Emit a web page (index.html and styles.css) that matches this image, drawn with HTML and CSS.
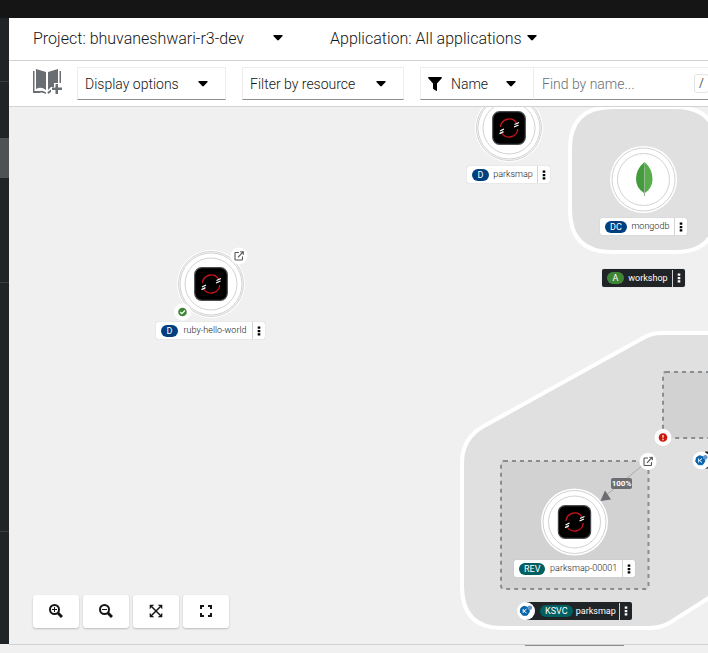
FILE: index.html
```html
<!DOCTYPE html>
<html lang="en">
<head>
<meta charset="utf-8">
<title>Topology</title>
<link rel="stylesheet" href="styles.css">
</head>
<body>
<svg class="defs" aria-hidden="true">
  <symbol id="caret" viewBox="0 0 10 6"><path d="M1 0h8q1 0 .6.9L5.8 5q-.8.8-1.6 0L.4.9Q0 0 1 0z"/></symbol>
  <symbol id="kebab" viewBox="0 0 4 10"><path d="M.7.5h2.6v2.300H.7zM.7 3.900h2.600v2.300H.7zM.7 7.300h2.600v2.300H.7z"/></symbol>
  <symbol id="open" viewBox="0 0 10 10"><path d="M5 1.500H1.800Q1 1.500 1 2.300V8.200Q1 9 1.800 9H7.700Q8.500 9 8.500 8.200V5.500M4 6.300 9 1M6.200.700H9.300V3.800" fill="none" stroke="#555" stroke-width="1.100"/></symbol>
  <symbol id="openshift" viewBox="0 0 34 34">
    <rect x=".7" y=".7" width="32.600" height="32.600" rx="7" fill="#000" stroke="#4a4d50" stroke-width="1.200"/>
    <path d="M8.500 16A8.700 8.700 0 0 1 24.500 12M25.700 18A8.700 8.700 0 0 1 9.700 22" fill="none" stroke="#c9151b" stroke-width="1.300"/>
    <path d="M22.500 13.500 27 11.500M22 16 26.500 14M8 20 12 18M7.500 22.700 11.500 20.700" stroke="#fff" stroke-width="1.300"/>
  </symbol>
  <symbol id="knative" viewBox="0 0 18 18">
    <circle cx="9" cy="9" r="9" fill="#fff"/>
    <path d="M7 4.200 11 5.500 12.500 9.500 10 13.200 5.800 13.200 3.200 10 4 6z" fill="#0865ad" stroke="#0865ad" stroke-width="1" stroke-linejoin="round"/>
    <circle cx="12.800" cy="5.800" r="2.300" fill="#6695ca"/>
    <path d="M6.200 7v4M9.500 7 7 9l2.500 2" fill="none" stroke="#fff" stroke-width="1"/>
  </symbol>
</svg>
<header class="masthead"></header>
<div class="shell">
  <nav class="sidebar" aria-label="Main"><div class="nav-first"></div><div class="nav-gap"></div><div class="nav-current"></div><div class="nav-mid"></div><div class="nav-mid2"></div></nav>
  <main class="main">
    <div class="context">
      <button class="context-item project">Project: bhuvaneshwari-r3-dev<svg class="caret"><use href="#caret"/></svg></button>
      <button class="context-item app">Application: All applications<svg class="caret"><use href="#caret"/></svg></button>
    </div>
    <div class="toolbar">
      <button class="catalog" aria-label="Add to project">
        <svg width="30" height="28" viewBox="0 0 30 28" fill="#6a6e73"><path d="M3 1 13 4V22Q8 18 3 21z"/><path d="M15 4 25 1V15H21V19H18L15 22z"/><path d="M0 3H1.500V23H7Q10 22 13 24.500V26Q9 23.500 6 25H0zM26.500 3H28V15H26.500zM14.500 24 18 21.500V24L15 26zM22.500 16H25V19.500H29V22H25V26H22.500V22H19V19.500H22.500z"/></svg>
      </button>
      <button class="picker display">Display options<svg class="caret"><use href="#caret"/></svg></button>
      <button class="picker resource">Filter by resource<svg class="caret"><use href="#caret"/></svg></button>
      <div class="search">
        <button class="picker name"><svg width="14" height="14" viewBox="0 0 14 14"><path d="M.7 0h12.600q1 .4.400 1.200L9 6.500V13.500q-.3.700-1 .3L5.300 12 5 11.500V6.500L.3 1.200Q-.2.300.7 0z"/></svg><span>Name</span><svg class="caret"><use href="#caret"/></svg></button>
        <input class="find" type="text" placeholder="Find by name..." aria-label="Find by name">
        <kbd>/</kbd>
      </div>
    </div>
    <section class="canvas" aria-label="Topology">
      <svg class="graph" aria-hidden="true">
        <g transform="translate(-9 -107)">
          <path class="group" d="M570 149Q570 107 612 107H675Q717 107 717 149V210Q717 252 675 252H612Q570 252 570 210z"/>
          <path class="group" d="M462 463Q462 438 484 426L643 338Q651 333 662 333H740V578L671 622Q661 628 650 628H502Q462 628 462 586z"/>
          <rect class="revision" x="663" y="372" width="130" height="66" rx="3"/>
          <rect class="revision" x="501" y="461" width="147.500" height="128" rx="3"/>
          <g class="ring"><circle cx="509" cy="128" r="34"/><circle class="line" cx="509" cy="128" r="32.500"/><circle class="line" cx="509" cy="128" r="31"/><circle class="line" cx="509" cy="128" r="26"/></g>
          <g class="ring"><circle cx="643.500" cy="179.500" r="33.500"/><circle class="line" cx="643.500" cy="179.500" r="31.500"/><circle class="line" cx="643.500" cy="179.500" r="26"/></g>
          <g class="ring"><circle cx="211" cy="284" r="34"/><circle class="line" cx="211" cy="284" r="32.500"/><circle class="line" cx="211" cy="284" r="31"/><circle class="line" cx="211" cy="284" r="26"/></g>
          <g class="ring"><circle cx="574.500" cy="522" r="33.500"/><circle class="line" cx="574.500" cy="522" r="31.500"/><circle class="line" cx="574.500" cy="522" r="26"/></g>
          <use href="#openshift" x="492" y="111" width="34" height="34"/>
          <use href="#openshift" x="194" y="267" width="34" height="34"/>
          <use href="#openshift" x="557.500" y="505" width="34" height="34"/>
          <path d="M644.500 162Q636 169 636 179 636 188 644 193V196H644.500z" fill="#439b3c"/>
          <path d="M644.500 162Q652.500 169 652.500 179 652.500 188 645 193V196H644.500z" fill="#56ad4a"/>
          <path d="M644.500 168V196" stroke="#9bb79a" stroke-width=".8"/>
          <path d="M643 465 604 497" stroke="#aaa"/>
          <path d="M600.500 501 605 490.500 611 499.500z" fill="#6a6e73"/>
          <circle cx="239" cy="256" r="8.500" fill="#fff"/><use href="#open" x="234" y="251" width="10" height="10"/>
          <circle cx="182.500" cy="312" r="8.500" fill="#fff"/><circle cx="182.500" cy="312" r="4.300" fill="#3e8635"/><path d="m180.200 312 1.700 1.700 3-3.200" fill="none" stroke="#fff" stroke-width="1.200"/>
          <circle cx="648" cy="461.500" r="8.500" fill="#fff"/><use href="#open" x="643" y="456.500" width="10" height="10"/>
          <circle cx="663" cy="437.500" r="8.500" fill="#fff"/><circle cx="663" cy="437.500" r="4.300" fill="#c9190b"/><path d="M663 435v2.700M663 438.700v1.500" stroke="#fff" stroke-width="1.200"/>
          <rect x="705" y="451.500" width="30" height="17" fill="#212427"/>
          <use href="#knative" x="692.500" y="451.500" width="18" height="18"/>
        </g>
      </svg>
      <div class="tag t-parks"><span class="badge blue">D</span><span class="label">parksmap</span><button aria-label="parksmap actions"><svg><use href="#kebab"/></svg></button></div>
      <div class="tag t-mongo"><span class="badge blue">DC</span><span class="label">mongodb</span><button aria-label="mongodb actions"><svg><use href="#kebab"/></svg></button></div>
      <div class="tag dark t-work"><span class="badge green">A</span><span class="label">workshop</span><button aria-label="workshop actions"><svg><use href="#kebab"/></svg></button></div>
      <div class="tag t-ruby"><span class="badge blue">D</span><span class="label">ruby-hello-world</span><button aria-label="ruby-hello-world actions"><svg><use href="#kebab"/></svg></button></div>
      <div class="tag t-rev"><span class="badge teal">REV</span><span class="label">parksmap-00001</span><button aria-label="parksmap-00001 actions"><svg><use href="#kebab"/></svg></button></div>
      <div class="tag dark t-ksvc"><svg class="kn"><use href="#knative"/></svg><span class="badge teal">KSVC</span><span class="label">parksmap</span><button aria-label="parksmap service actions"><svg><use href="#kebab"/></svg></button></div>
      <span class="traffic">100%</span>
      <div class="controls">
        <button aria-label="Zoom in"><svg viewBox="0 0 14 14"><circle cx="5.500" cy="5.500" r="4.500"/><path d="M9 9 13 13" class="handle"/><path d="M3 5.500h5M5.500 3v5" class="sign"/></svg></button>
        <button aria-label="Zoom out"><svg viewBox="0 0 14 14"><circle cx="5.500" cy="5.500" r="4.500"/><path d="M9 9 13 13" class="handle"/><path d="M3 5.500h5" class="sign"/></svg></button>
        <button aria-label="Fit to screen"><svg viewBox="0 0 14 14"><path d="M3 3 11 11M11 3 3 11" class="cross"/><path class="solid" d="M.7.700h4.500L.7 5.200zM13.300.700v4.500L8.800.700zM.7 13.300v-4.500l4.500 4.500zM13.300 13.300h-4.500l4.500-4.500z"/></svg></button>
        <button aria-label="Reset view"><svg viewBox="0 0 14 14"><path d="M2 5V2H5M9 2h3V5M12 9v3H9M5 12H2V9"/></svg></button>
      </div>
    </section>
  </main>
</div>
<footer class="bottom"><div class="scrollbar"></div></footer>
</body>
</html>
```
FILE: styles.css
```css
* { box-sizing: border-box; }
body { margin: 0; height: 100vh; display: flex; flex-direction: column; overflow: hidden; background: #f0f0f0; color: #151515; font-family: Roboto, sans-serif; font-size: 14px; }
button { border: 0; padding: 0; margin: 0; background: none; font: inherit; color: inherit; }
svg { display: block; flex: none; }
.defs { position: absolute; width: 0; height: 0; }
.masthead { height: 18px; background: #151515; flex: none; }
.shell { flex: 1; display: flex; min-height: 0; }
.sidebar { width: 9px; background: #212427; display: flex; flex-direction: column; flex: none; }
.nav-first { height: 64px; border-bottom: 1px solid #3c3f42; }
.nav-gap { height: 56px; }
.nav-current { height: 40px; background: #4f5255; }
.nav-mid { height: 105px; border-bottom: 1px solid #3c3f42; }
.nav-mid2 { height: 249px; border-bottom: 1px solid #3c3f42; }
.main { flex: 1; min-width: 0; display: flex; flex-direction: column; overflow: hidden; }
.context { height: 43px; flex: none; background: #fff; border-bottom: 1px solid #d2d2d2; display: flex; align-items: center; padding: 0 24px 2px; white-space: nowrap; }
.context-item { display: flex; align-items: center; font-weight: 300; font-size: 16px; }
.project { width: 250px; justify-content: space-between; margin-right: 47px; }
.app { gap: 5px; }
.caret { width: 10px; height: 6px; }
.toolbar { height: 46px; flex: none; background: #fff; border-bottom: 1px solid #d2d2d2; display: flex; align-items: center; padding-left: 24px; gap: 16px; white-space: nowrap; }
.catalog { width: 28px; padding-bottom: 4px; }
.picker { height: 33px; flex: none; border: 1px solid #ededed; border-bottom-color: #8a8d90; display: flex; align-items: center; justify-content: space-between; padding: 0 17px 0 7px; font-weight: 300; }
.display { width: 149px; }
.resource { width: 162px; }
.search { display: flex; align-items: center; flex: 1 0 300px; position: relative; }
.name { width: 114px; }
.name span { margin-right: 9px; }
.find { flex: 1; height: 33px; border: 0; border-top: 1px solid #ededed; border-bottom: 1px solid #8a8d90; padding: 0 8px; background: #fff; font: 300 14px Roboto, sans-serif; outline: 0; }
.find::placeholder { color: #6a6e73; opacity: 1; }
kbd { position: absolute; left: 274px; width: 15px; height: 19px; border: 1px solid #e4e4e4; border-radius: 3px; text-align: center; font: 12px/17px Roboto, sans-serif; color: #555; }
.canvas { position: relative; flex: 1; overflow: hidden; }
.graph { position: absolute; inset: 0; width: 100%; height: 100%; }
.group { fill: #e0e0e0; stroke: #fff; stroke-width: 4; }
.revision { fill: #d2d2d2; stroke: #8a8d90; stroke-width: 2; stroke-dasharray: 4 4; }
.ring circle { fill: #fff; }
.ring .line { stroke: #d2d2d2; }
.tag { position: absolute; display: flex; align-items: center; height: 17px; padding-left: 5px; background: #fff; border-radius: 2px; box-shadow: 0 0 1px #aaa; white-space: nowrap; font-weight: 300; font-size: 9px; line-height: 17px; }
.tag button { width: 13px; height: 17px; padding-right: 1px; border-left: 1px solid #d2d2d2; display: flex; align-items: center; justify-content: center; }
.tag button svg { width: 4px; height: 10px; }
.badge { height: 12px; min-width: 17px; padding: 0 5px; border-radius: 6px; color: #fff; line-height: 12px; font-weight: 400; text-align: center; }
.blue { background: #004080; }
.green { background: #3e8635; }
.teal { background: #005f60; }
.label { flex: 1; text-align: center; }
.dark { background: #212427; color: #fff; fill: #fff; font-weight: 400; }
.t-parks { left: 458px; top: 59px; width: 83px; }
.t-mongo { left: 591px; top: 111px; width: 87px; }
.t-work { left: 593px; top: 162px; width: 83px; height: 18px; }
.t-ruby { left: 147px; top: 215px; width: 109px; }
.t-rev { left: 505px; top: 453px; width: 121px; }
.t-ksvc { left: 508px; top: 495px; width: 115px; height: 18px; padding-left: 0; background: linear-gradient(90deg, transparent 9px, #212427 9px); box-shadow: none; }
.kn { width: 18px; height: 18px; margin-right: 5px; }
.traffic { position: absolute; left: 602px; top: 371px; width: 21px; height: 11px; background: #6a6e73; color: #fff; border-radius: 2px; text-align: center; font-weight: 700; font-size: 8px; line-height: 11px; }
.controls { position: absolute; left: 24px; bottom: 16px; display: flex; gap: 4px; }
.controls button { width: 46px; height: 33px; background: #fff; border-radius: 3px; box-shadow: 0 1px 2px #bbb; display: flex; align-items: center; justify-content: center; }
.controls svg { width: 14px; height: 14px; margin-bottom: 2px; fill: none; stroke: #151515; stroke-width: 2; }
.controls .handle { stroke-width: 3; }
.controls .sign { stroke-width: 1; }
.controls .cross { stroke-width: 1.5; }
.controls .solid { fill: #151515; stroke: none; }
.bottom { height: 9px; flex: none; margin-left: 9px; border-top: 1px solid #d2d2d2; }
.scrollbar { margin-left: 516px; width: 99px; height: 1px; background: #8a8d90; }
```
